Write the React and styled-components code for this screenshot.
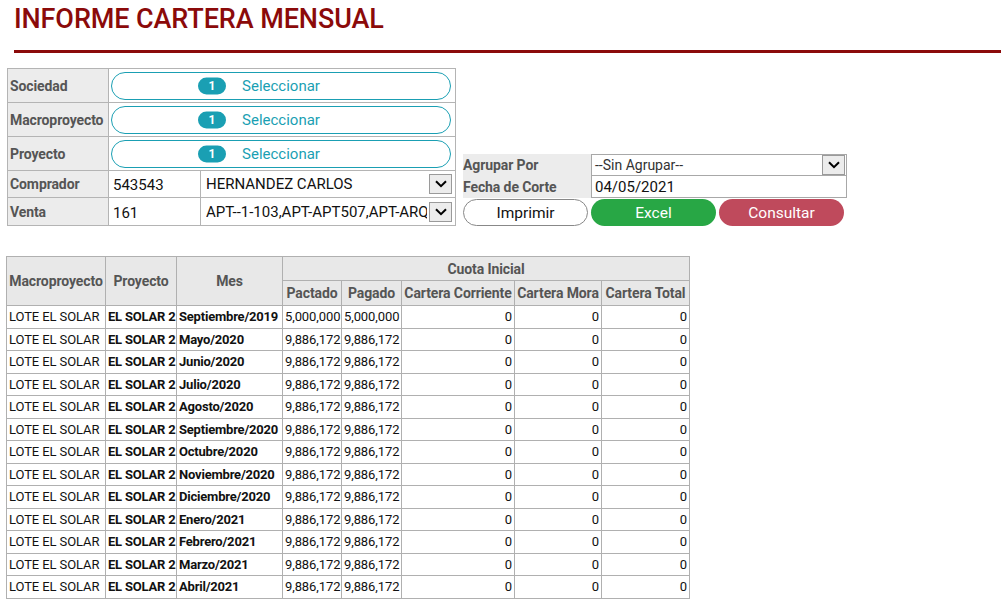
import React from "react";
import styled, { createGlobalStyle } from "styled-components";

const Global = createGlobalStyle`
  html, body { margin: 0; padding: 0; background: #fff; }
  body { font-family: Roboto, "Liberation Sans", Arial, sans-serif; color: #222; }
`;

const Page = styled.div`
  padding: 4px 0 0 0;
`;

const Header = styled.div`
  margin-left: 14px;
  padding-bottom: 16px;
  border-bottom: 3px solid #8b0a0a;
`;

const Title = styled.h1`
  margin: 0;
  font-size: 27px;
  font-weight: 500;
  line-height: 30px;
  color: #8b0a0a;
  letter-spacing: -0.1px;
`;

const FilterArea = styled.div`
  display: flex;
  align-items: flex-end;
  gap: 7px;
  margin: 15px 0 0 7px;
`;

const FilterTable = styled.table`
  border-collapse: collapse;
  border: 1px solid #a8a8a8;
  width: 448px;
  table-layout: fixed;
`;

const Label = styled.td`
  background: #ececec;
  color: #555;
  font-weight: 700;
  font-size: 14px;
  padding: 0 1px 0 2px;
  border: 1px solid #b4b4b4;
  height: ${(p) => p.$h}px;
  white-space: nowrap;
  letter-spacing: -0.1px;
  overflow: hidden;
`;

const Cell = styled.td`
  border: 1px solid #b4b4b4;
  padding: ${(p) => p.$pad || "0 2px"};
  font-size: 15px;
  color: #111;
  vertical-align: middle;
`;

const Pill = styled.button`
  display: flex;
  align-items: center;
  justify-content: center;
  width: 340px;
  height: 28px;
  margin-left: 1px;
  background: #fff;
  border: 1.5px solid #1a9fb3;
  border-radius: 14px;
  color: #1a9fb3;
  font-family: Roboto, sans-serif;
  font-size: 15px;
  padding: 0;
  cursor: pointer;
`;

const PillText = styled.span`
  position: relative;
`;

const Badge = styled.span`
  position: absolute;
  right: calc(100% + 16px);
  top: 50%;
  transform: translateY(-50%);
  width: 28px;
  height: 17px;
  border-radius: 9px;
  background: #1a9fb3;
  color: #fff;
  font-size: 12px;
  font-weight: 700;
  display: flex;
  align-items: center;
  justify-content: center;
`;

const SelectBox = styled.div`
  display: flex;
  align-items: center;
  justify-content: space-between;
  gap: 2px;
`;

const SelectText = styled.span`
  overflow: hidden;
  white-space: nowrap;
  flex: 1;
  font-size: 15px;
  color: #111;
`;

const Arrow = styled.span`
  flex: none;
  width: 23px;
  height: 20px;
  border: 1px solid #9a9a9a;
  background: #ececec;
  display: flex;
  align-items: center;
  justify-content: center;
  box-sizing: border-box;
`;

const Chevron = () => (
  <svg width="12" height="8" viewBox="0 0 12 8">
    <path d="M1 1.2 L6 6.2 L11 1.2" fill="none" stroke="#000" strokeWidth="2" />
  </svg>
);

const RightPanel = styled.div`
  display: flex;
  flex-direction: column;
  gap: 1px;
`;

const OptionGrid = styled.div`
  display: grid;
  grid-template-columns: 128px 256px;
  background: #ececec;
  width: 384px;
`;

const OptLabel = styled.div`
  font-size: 14px;
  font-weight: 700;
  color: #555;
  height: 22px;
  display: flex;
  align-items: center;
  letter-spacing: -0.1px;
`;

const OptField = styled.div`
  background: #fff;
  border: 1px solid #a8a8a8;
  border-top: ${(p) => (p.$first ? "1px solid #a8a8a8" : "none")};
  box-sizing: border-box;
  height: 22px;
  display: flex;
  align-items: center;
  justify-content: space-between;
  padding: 0 1px 0 3px;
  font-size: ${(p) => (p.$big ? "15px" : "14px")};
  color: ${(p) => (p.$muted ? "#333" : "#111")};
`;

const Buttons = styled.div`
  display: flex;
  gap: 3px;
`;

const Btn = styled.button`
  width: 125px;
  height: 27px;
  border-radius: 14px;
  font-family: Roboto, sans-serif;
  font-size: 15.5px;
  padding: 0;
  border: ${(p) => (p.$variant === "light" ? "1px solid #888" : "none")};
  background: ${(p) =>
    p.$variant === "green" ? "#28a745" : p.$variant === "red" ? "#bf4a5c" : "#fff"};
  color: ${(p) => (p.$variant === "light" ? "#111" : "#fff")};
  cursor: pointer;
`;

const Report = styled.table`
  margin: 30px 0 0 6px;
  border-collapse: collapse;
  border: 1px solid #a0a0a0;
  font-size: 13px;
  table-layout: fixed;
  width: 683px;
`;

const Th = styled.th`
  background: #e8e8e8;
  color: #555;
  font-weight: 700;
  font-size: 14px;
  border: 1px solid #b0b0b0;
  padding: 0 1px;
  height: ${(p) => p.$h || 23}px;
  white-space: nowrap;
  letter-spacing: -0.1px;
  overflow: hidden;
`;

const Td = styled.td`
  border: 1px solid #b0b0b0;
  padding: 0 2px;
  height: 21.5px;
  white-space: nowrap;
  overflow: hidden;
  color: #111;
  font-weight: ${(p) => (p.$bold ? 700 : 400)};
  text-align: ${(p) => (p.$right ? "right" : "left")};
  letter-spacing: ${(p) => (p.$bold ? "-0.2px" : "-0.1px")};
`;

const colWidths = [99, 71, 106, 59, 60, 113, 87, 88];

const months = [
  ["Septiembre/2019", "5,000,000", "5,000,000"],
  ["Mayo/2020"],
  ["Junio/2020"],
  ["Julio/2020"],
  ["Agosto/2020"],
  ["Septiembre/2020"],
  ["Octubre/2020"],
  ["Noviembre/2020"],
  ["Diciembre/2020"],
  ["Enero/2021"],
  ["Febrero/2021"],
  ["Marzo/2021"],
  ["Abril/2021"],
];

const SelectorRow = ({ label }) => (
  <tr>
    <Label $h={33}>{label}</Label>
    <Cell colSpan={2} $pad="0 2px 0 1px">
      <Pill>
        <PillText>
          <Badge>1</Badge>
          Seleccionar
        </PillText>
      </Pill>
    </Cell>
  </tr>
);

export default function App() {
  return (
    <Page>
      <Global />
      <Header>
        <Title>INFORME CARTERA MENSUAL</Title>
      </Header>

      <FilterArea>
        <FilterTable>
          <colgroup>
            <col style={{ width: 101 }} />
            <col style={{ width: 92 }} />
            <col style={{ width: 255 }} />
          </colgroup>
          <tbody>
            <SelectorRow label="Sociedad" />
            <SelectorRow label="Macroproyecto" />
            <SelectorRow label="Proyecto" />
            <tr>
              <Label $h={26}>Comprador</Label>
              <Cell $pad="2px 2px 0 4px">543543</Cell>
              <Cell $pad="0 3px 0 5px">
                <SelectBox>
                  <SelectText>HERNANDEZ CARLOS</SelectText>
                  <Arrow>
                    <Chevron />
                  </Arrow>
                </SelectBox>
              </Cell>
            </tr>
            <tr>
              <Label $h={27}>Venta</Label>
              <Cell $pad="2px 2px 0 4px">161</Cell>
              <Cell $pad="0 3px 0 5px">
                <SelectBox>
                  <SelectText>APT--1-103,APT-APT507,APT-ARQ102</SelectText>
                  <Arrow>
                    <Chevron />
                  </Arrow>
                </SelectBox>
              </Cell>
            </tr>
          </tbody>
        </FilterTable>

        <RightPanel>
          <OptionGrid>
            <OptLabel>Agrupar Por</OptLabel>
            <OptField $first $muted>
              --Sin Agrupar--
              <Arrow>
                <Chevron />
              </Arrow>
            </OptField>
            <OptLabel>Fecha de Corte</OptLabel>
            <OptField $big>04/05/2021</OptField>
          </OptionGrid>
          <Buttons>
            <Btn $variant="light">Imprimir</Btn>
            <Btn $variant="green">Excel</Btn>
            <Btn $variant="red">Consultar</Btn>
          </Buttons>
        </RightPanel>
      </FilterArea>

      <Report>
        <colgroup>
          {colWidths.map((w, i) => (
            <col key={i} style={{ width: w }} />
          ))}
        </colgroup>
        <thead>
          <tr>
            <Th rowSpan={2}>Macroproyecto</Th>
            <Th rowSpan={2}>Proyecto</Th>
            <Th rowSpan={2}>Mes</Th>
            <Th colSpan={5} $h={23}>Cuota Inicial</Th>
          </tr>
          <tr>
            <Th $h={24}>Pactado</Th>
            <Th $h={24}>Pagado</Th>
            <Th $h={24}>Cartera Corriente</Th>
            <Th $h={24}>Cartera Mora</Th>
            <Th $h={24}>Cartera Total</Th>
          </tr>
        </thead>
        <tbody>
          {months.map(([mes, pac = "9,886,172", pag = "9,886,172"]) => (
            <tr key={mes}>
              <Td>LOTE EL SOLAR</Td>
              <Td $bold>EL SOLAR 2</Td>
              <Td $bold>{mes}</Td>
              <Td>{pac}</Td>
              <Td>{pag}</Td>
              <Td $right>0</Td>
              <Td $right>0</Td>
              <Td $right>0</Td>
            </tr>
          ))}
        </tbody>
      </Report>
    </Page>
  );
}
